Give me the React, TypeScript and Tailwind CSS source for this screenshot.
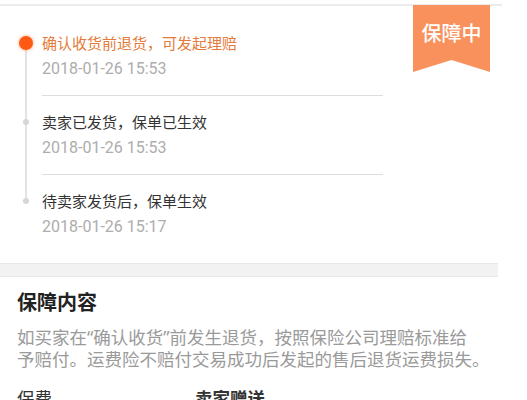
import React from "react";

const CJK = { fontFamily: '"Noto Sans CJK SC", "Noto Sans", sans-serif' };
const NUM = { fontFamily: 'Roboto, "Noto Sans", sans-serif' };
const PARA = { fontFamily: '"Noto Sans", "Noto Sans CJK SC", sans-serif' };

type Item = { title: string; time: string; active?: boolean; last?: boolean; first?: boolean };

const items: Item[] = [
  { title: "确认收货前退货，可发起理赔", time: "2018-01-26 15:53", active: true, first: true },
  { title: "卖家已发货，保单已生效", time: "2018-01-26 15:53" },
  { title: "待卖家发货后，保单生效", time: "2018-01-26 15:17", last: true },
];

function Row({ item }: { item: Item }) {
  return (
    <div className="flex">
      <div className="relative w-[42px] shrink-0">
        <div
          className={`absolute left-[25px] w-[2px] bg-[#e3e3e3] ${item.first ? "top-[10px]" : "top-0"} ${item.last ? "h-[10px]" : "bottom-0"}`}
        />
        {item.active ? (
          <div className="absolute left-[19px] top-[3px] h-[14px] w-[14px] rounded-full bg-[#ff5a14] shadow-[0_0_3px_1px_rgba(255,120,60,0.35)]" />
        ) : (
          <div className="absolute left-[23px] top-[7px] h-[6px] w-[6px] rounded-full bg-[#d6d6d6]" />
        )}
      </div>
      <div className="flex w-[341px] flex-col">
        <div
          className={`text-[15px] leading-[20px] ${item.active ? "text-[#e57b3a]" : "text-[#333333]"}`}
          style={CJK}
        >
          {item.title}
        </div>
        <div className="mt-[6px] text-[16px] leading-[20px] text-[#adadad]" style={NUM}>
          {item.time}
        </div>
        {!item.last && <div className="mt-[16px] mb-[16px] h-[1px] bg-[#dedede]" />}
      </div>
    </div>
  );
}

export default function App() {
  return (
    <div className="relative h-[400px] w-[527px] overflow-hidden bg-white" style={CJK}>
      <div className="mt-[4px] h-[2px] w-[502px] bg-[#ececec]" />

      {/* ribbon */}
      <div className="absolute left-[413px] top-[5px] h-[68px] w-[77px]">
        <svg width="77" height="68" viewBox="0 0 77 68" className="absolute left-0 top-0">
          <polygon points="0,0 77,0 77,67 38.5,55 0,67" fill="#f8915c" />
        </svg>
        <div className="relative pt-[16px] text-center text-[20px] font-medium leading-[24px] text-white">
          保障中
        </div>
      </div>

      <div className="pt-[27px]">
        {items.map((it, i) => (
          <Row key={i} item={it} />
        ))}
      </div>

      <div className="mt-[26px] h-[14px] w-[498px] border-y border-[#e8e8e8] bg-[#f2f2f2]" />

      <div className="px-[17px]">
        <div className="mt-[12px] text-[20px] font-bold leading-[26px] text-[#222222]">保障内容</div>
        <div className="mt-[11px] text-[17.5px] leading-[22px] text-[#9a9a9a]" style={PARA}>
          <div className="whitespace-nowrap">如买家在“确认收货”前发生退货，按照保险公司理赔标准给</div>
          <div className="whitespace-nowrap">予赔付。运费险不赔付交易成功后发起的售后退货运费损失。</div>
        </div>
        <div className="mt-[17px] flex text-[17.5px] leading-[22px] text-[#333333]">
          <div className="w-[178px]">保费</div>
          <div className="font-bold">卖家赠送</div>
        </div>
      </div>
    </div>
  );
}
